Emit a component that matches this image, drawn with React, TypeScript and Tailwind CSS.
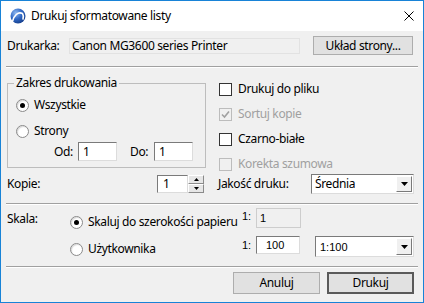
import React from "react";

const ui = "font-['Noto_Sans',sans-serif] text-[12px] leading-[16px] tracking-[-0.35px] whitespace-nowrap text-black";
const num = "font-['Liberation_Sans',Arial,sans-serif] text-[11px] tracking-normal";
const sunken =
  "border border-t-[#7a7a7a] border-l-[#7a7a7a] border-b-[#dcdcdc] border-r-[#dcdcdc] bg-white";

function AppIcon() {
  return (
    <svg width="16" height="16" viewBox="0 0 16 16">
      <defs>
        <radialGradient id="g" cx="35%" cy="30%" r="75%">
          <stop offset="0" stopColor="#8fb8f0" />
          <stop offset="0.55" stopColor="#2f67c4" />
          <stop offset="1" stopColor="#173f8c" />
        </radialGradient>
      </defs>
      <circle cx="8" cy="8" r="7.5" fill="url(#g)" />
      <path d="M2.5 13.5 C4 7 8 3.5 12.5 5.5 C13.5 7 13.5 9 13 11" fill="none" stroke="#fff" strokeWidth="1.6" strokeLinecap="round" />
    </svg>
  );
}

function Radio({ checked }: { checked?: boolean }) {
  return (
    <span className="flex h-[13px] w-[13px] shrink-0 items-center justify-center rounded-full border border-[#8a8a8a] bg-white shadow-[inset_1px_1px_1px_rgba(0,0,0,0.15)]">
      {checked && <span className="h-[5px] w-[5px] rounded-full bg-black" />}
    </span>
  );
}

function Check({ checked, disabled }: { checked?: boolean; disabled?: boolean }) {
  return (
    <span
      className={
        disabled
          ? "flex h-[13px] w-[13px] shrink-0 items-center justify-center border border-[#bcbcbc] bg-[#f0f0f0]"
          : "flex h-[13px] w-[13px] shrink-0 items-center justify-center border border-[#333333] bg-white"
      }
    >
      {checked && (
        <svg width="9" height="9" viewBox="0 0 9 9">
          <path d="M1 4.5 L3.5 7 L8 1.5" fill="none" stroke={disabled ? "#a0a0a0" : "#000"} strokeWidth="1.6" />
        </svg>
      )}
    </span>
  );
}

function Separator() {
  return <div className="ml-[5px] h-[2px] w-[412px] border-t border-b border-t-[#a0a0a0] border-b-white" />;
}

function DropArrow() {
  return (
    <span className="flex h-full w-[16px] items-center justify-center border border-t-white border-l-white border-b-[#7a7a7a] border-r-[#7a7a7a] bg-[#f0f0f0]">
      <svg width="7" height="4" viewBox="0 0 7 4">
        <path d="M0 0 H7 L3.5 4 Z" fill="#000" />
      </svg>
    </span>
  );
}

function Button({ label, primary, className }: { label: string; primary?: boolean; className?: string }) {
  return (
    <div
      className={
        "flex items-center justify-center bg-[#e1e1e1] " +
        (primary ? "border-2 border-[#5a5a5a] " : "border border-[#adadad] ") +
        (className ?? "")
      }
    >
      {label}
    </div>
  );
}

export default function App() {
  return (
    <div className={"flex h-[303px] w-[424px] flex-col border border-[#1883d7] bg-[#f0f0f0] " + ui}>
      {/* title bar */}
      <div className="flex h-[30px] shrink-0 items-center justify-between bg-white">
        <div className="flex items-center">
          <span className="ml-[9px]">
            <AppIcon />
          </span>
          <span className="ml-[5px]">Drukuj sformatowane listy</span>
        </div>
        <svg className="mr-[9px]" width="10" height="10" viewBox="0 0 10 10">
          <path d="M0.5 0.5 L9.5 9.5 M9.5 0.5 L0.5 9.5" stroke="#000" strokeWidth="1" />
        </svg>
      </div>

      {/* printer */}
      <div className="mt-[5px] flex h-[19px] items-center pl-[6px]">
        <span className="w-[62px]">Drukarka:</span>
        <div className="flex h-[16px] w-[231px] items-center border border-[#e2e2e2] pl-[2px]">
          Canon MG3600 series Printer
        </div>
        <Button label="Układ strony..." className="ml-[13px] h-[19px] w-[100px]" />
      </div>

      <div className="mt-[11px]">
        <Separator />
      </div>

      {/* range + options */}
      <div className="flex h-[106px]">
        <fieldset className="ml-[6px] mt-[7px] h-[93px] w-[199px] border border-[#bdbdbd]">
          <legend className="ml-[6px] px-[2px]">Zakres drukowania</legend>
          <div className="mt-[6px] flex h-[16px] items-center gap-[5px] pl-[8px]">
            <Radio checked />
            <span>Wszystkie</span>
          </div>
          <div className="mt-[10px] flex h-[16px] items-center gap-[5px] pl-[8px]">
            <Radio />
            <span>Strony</span>
          </div>
          <div className="mt-[3px] flex items-center pl-[46px]">
            <span className="w-[24px]">Od:</span>
            <div className={"flex h-[19px] w-[39px] items-center pl-[4px] " + sunken}>1</div>
            <span className="ml-[13px] w-[24px]">Do:</span>
            <div className={"flex h-[19px] w-[39px] items-center pl-[4px] " + sunken}>1</div>
          </div>
        </fieldset>

        <div className="ml-[13px] mt-[13px] flex flex-col gap-[9px]">
          <div className="flex h-[16px] items-center gap-[6px]">
            <Check />
            <span>Drukuj do pliku</span>
          </div>
          <div className="flex h-[16px] items-center gap-[6px] text-[#a0a0a0]">
            <Check checked disabled />
            <span>Sortuj kopie</span>
          </div>
          <div className="flex h-[16px] items-center gap-[6px]">
            <Check />
            <span>Czarno-białe</span>
          </div>
          <div className="flex h-[16px] items-center gap-[6px] text-[#a0a0a0]">
            <Check disabled />
            <span>Korekta szumowa</span>
          </div>
        </div>
      </div>

      {/* copies + quality */}
      <div className="flex h-[20px] items-center pl-[6px]">
        <span className="w-[150px]">Kopie:</span>
        <div className="flex h-[18px] w-[47px]">
          <div className={"flex h-full w-[31px] items-center pl-[5px] " + sunken}>1</div>
          <div className="flex w-[16px] flex-col">
            <span className="flex h-[9px] items-center justify-center border border-t-white border-l-white border-b-[#8a8a8a] border-r-[#8a8a8a] bg-[#e6e6e6]">
              <svg width="5" height="3" viewBox="0 0 5 3"><path d="M0 3 H5 L2.5 0 Z" fill="#000" /></svg>
            </span>
            <span className="flex h-[9px] items-center justify-center border border-t-white border-l-white border-b-[#8a8a8a] border-r-[#8a8a8a] bg-[#e6e6e6]">
              <svg width="5" height="3" viewBox="0 0 5 3"><path d="M0 0 H5 L2.5 3 Z" fill="#000" /></svg>
            </span>
          </div>
        </div>
        <span className="ml-[14px] w-[93px]">Jakość druku:</span>
        <div className={"flex h-[20px] w-[103px] items-center justify-between p-[1px] pl-[3px] " + sunken}>
          <span>Średnia</span>
          <DropArrow />
        </div>
      </div>

      <div className="mt-[9px]">
        <Separator />
      </div>

      {/* scale */}
      <div className="mt-[3px] flex h-[20px] items-start">
        <span className="mt-[3px] w-[69px] pl-[6px]">Skala:</span>
        <div className="mt-[6px] flex h-[16px] w-[172px] items-center gap-[5px]">
          <Radio checked />
          <span>Skaluj do szerokości papieru</span>
        </div>
        <span className={"w-[14px] " + num}>1:</span>
        <div className={"flex h-[20px] w-[45px] items-center border border-[#cdcdcd] pl-[3px] " + num}>1</div>
      </div>
      <div className="mt-[8px] flex h-[21px] items-start">
        <span className="w-[69px]" />
        <div className="mt-[5px] flex h-[16px] w-[172px] items-center gap-[5px]">
          <Radio />
          <span>Użytkownika</span>
        </div>
        <span className={"mt-[1px] w-[14px] " + num}>1:</span>
        <div className={"flex h-[18px] w-[44px] items-center pl-[9px] " + sunken + " " + num}>100</div>
        <div className={"ml-[15px] flex h-[21px] w-[99px] items-center justify-between p-[1px] pl-[4px] " + sunken + " " + num}>
          <span>1:100</span>
          <DropArrow />
        </div>
      </div>

      <div className="mt-[9px]">
        <Separator />
      </div>

      {/* buttons */}
      <div className="mt-[4px] flex justify-end gap-[7px] pr-[9px]">
        <Button label="Anuluj" className="h-[22px] w-[87px]" />
        <Button label="Drukuj" primary className="h-[22px] w-[87px]" />
      </div>
    </div>
  );
}
